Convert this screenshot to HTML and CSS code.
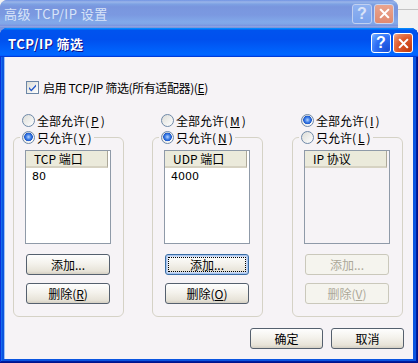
FILE: index.html
```html
<!DOCTYPE html>
<html lang="zh-CN">
<head>
  <meta charset="UTF-8">
  <title>TCP/IP 筛选</title>
  <link rel="stylesheet" href="styles.css">
</head>
<body>

  <div class="desktop">
    <div class="behind"></div>

    <!-- Parent dialog (inactive) -->
    <div class="window back">
      <div class="titlebar">
        <span class="title">高级 TCP/IP 设置</span>
        <div class="title-buttons">
          <span class="tbtn help">?</span>
          <span class="tbtn close">
            <svg viewBox="0 0 12 12" width="11" height="11"><path d="M2 2 L10 10 M10 2 L2 10" stroke="#fff" stroke-width="2.2" stroke-linecap="square"/></svg>
          </span>
        </div>
      </div>
    </div>

    <!-- TCP/IP filter dialog (active) -->
    <div class="window front">
      <div class="titlebar">
        <span class="title">TCP/IP 筛选</span>
        <div class="title-buttons">
          <span class="tbtn help">?</span>
          <span class="tbtn close">
            <svg viewBox="0 0 12 12" width="11" height="11"><path d="M2 2 L10 10 M10 2 L2 10" stroke="#fff" stroke-width="2.2" stroke-linecap="square"/></svg>
          </span>
        </div>
      </div>

      <div class="client">
        <div class="check-row">
          <span class="checkbox">
            <svg viewBox="0 0 11 11" width="11" height="11"><path d="M2 5 L4.3 7.5 L9 2.5 L9 4.6 L4.3 9.6 L2 7.1 Z" fill="#2356c8"/></svg>
          </span>
          <span class="narrow">启用 TCP/IP 筛选(所有适配器)(<u>E</u>)</span>
        </div>

        <div class="groups">
          <div class="col">
            <div class="radio-row"><span class="radio"></span>全部允许(<u>P</u>)</div>
            <fieldset class="group">
              <legend><span class="radio on"></span>只允许(<u>Y</u>)</legend>
              <div class="list">
                <div class="list-head"><span>TCP 端口</span></div>
                <div class="list-item">80</div>
              </div>
              <button class="btn">添加...</button>
              <button class="btn">删除(<u>R</u>)</button>
            </fieldset>
          </div>

          <div class="col">
            <div class="radio-row"><span class="radio"></span>全部允许(<u>M</u>)</div>
            <fieldset class="group">
              <legend><span class="radio on"></span>只允许(<u>N</u>)</legend>
              <div class="list">
                <div class="list-head"><span>UDP 端口</span></div>
                <div class="list-item">4000</div>
              </div>
              <button class="btn focused">添加...</button>
              <button class="btn">删除(<u>O</u>)</button>
            </fieldset>
          </div>

          <div class="col">
            <div class="radio-row"><span class="radio on"></span>全部允许(<u>I</u>)</div>
            <fieldset class="group">
              <legend><span class="radio"></span>只允许(<u>L</u>)</legend>
              <div class="list disabled">
                <div class="list-head"><span>IP 协议</span></div>
              </div>
              <button class="btn" disabled>添加...</button>
              <button class="btn" disabled>删除(<u>V</u>)</button>
            </fieldset>
          </div>
        </div>

        <div class="actions">
          <button class="btn wide">确定</button>
          <button class="btn wide">取消</button>
        </div>
      </div>
    </div>
  </div>

</body>
</html>
```

FILE: styles.css
```css
/* Basic Reset */
* {
  margin: 0;
  padding: 0;
  box-sizing: border-box;
}

body {
  font-family: "Noto Sans CJK SC", "Liberation Sans", sans-serif;
  font-size: 12px;
  color: #000;
  background: #f2f2f2;
  overflow: hidden;
}

u {
  text-decoration: underline;
  text-underline-offset: 1px;
}

.narrow {
  letter-spacing: -0.4px;
}

/* Desktop with stacked windows */
.desktop {
  position: relative;
  width: 418px;
  height: 363px;
}

.behind {
  position: absolute;
  left: 396px;
  top: 9px;
  width: 30px;
  border-top: 1px solid #c4c4c4;
}

.window {
  position: absolute;
  border-radius: 8px 8px 0 0;
}

.window.back {
  left: 0;
  top: 0;
  width: 398px;
  height: 363px;
  background: #7a96df;
}

.window.front {
  left: 0;
  top: 28px;
  width: 418px;
  height: 335px;
  display: flex;
  flex-direction: column;
  padding: 0 5px 4px 4px;
  background: #0a55e0;
  box-shadow: inset -1px -1px #00138c, inset 1px 1px #0831d9, inset -2px -2px #001ea0, inset 2px 2px #166aee;
}

/* Title bars */
.titlebar {
  display: flex;
  align-items: center;
  justify-content: space-between;
  border-radius: 7px 7px 0 0;
}

.back .titlebar {
  height: 27px;
  padding: 0 4px 0 4px;
  background: linear-gradient(#7697e7, #7e9ee3 3%, #94afe8 6%, #97b4e9 8%, #82a5e4 14%, #7c9fe2 17%, #7996de 25%, #7b99e1 56%, #82a9e9 81%, #80a5e7 89%, #7b96e1 94%, #7a93df 97%, #abbae3);
}

.front .titlebar {
  height: 29px;
  margin: 0 -5px 0 -4px;
  padding: 1px 5px 0 8px;
  background: linear-gradient(#0997ff, #0053ee 8%, #0050ee 40%, #0066ff 88%, #0066ff 93%, #005bff 95%, #003dd7 96%, #003dd7);
}

.title {
  font-size: 13px;
  font-weight: bold;
  letter-spacing: 0.5px;
  color: #fff;
}

.back .title {
  color: #d8e4f8;
  font-weight: normal;
}

.front .title {
  text-shadow: 1px 1px #0f1089;
}

.title-buttons {
  display: flex;
  gap: 2px;
}

.tbtn {
  width: 20px;
  height: 20px;
  display: flex;
  align-items: center;
  justify-content: center;
  border: 1px solid #fff;
  border-radius: 3px;
  font-family: "Liberation Sans", sans-serif;
  font-size: 16px;
  font-weight: bold;
  color: #fff;
}

.tbtn.help {
  background: radial-gradient(circle at 85% 85%, #1a4fd8, #2e6ef5 55%, #5d9bff 85%, #a7c8ff);
}

.tbtn.close {
  background: radial-gradient(circle at 85% 85%, #c23d12, #df5a2c 55%, #e8815a 80%, #f4b49a);
}

.back .tbtn {
  border-color: #c9d6f3;
  color: #e4ecfb;
}

.back .tbtn.help {
  background: linear-gradient(#93b6f3, #7aa3ee);
  opacity: 0.9;
}

.back .tbtn.close {
  background: linear-gradient(#eaa58f, #e08a70);
}

/* Client area */
.client {
  flex: 1;
  background: #f6f3f6;
  padding: 22px 9px 0 9px;
  box-shadow: inset 1px 0 #9cc0f5;
}

.check-row {
  display: flex;
  align-items: center;
  height: 17px;
  padding-left: 13px;
  gap: 4px;
}

.checkbox {
  width: 13px;
  height: 13px;
  display: flex;
  align-items: center;
  justify-content: center;
  border: 1px solid #6c86a6;
  background: linear-gradient(135deg, #dcdcd7, #fff);
}

.groups {
  display: flex;
  margin-top: 16px;
}

.col {
  width: 111px;
}

.col + .col {
  margin-left: 28px;
}

.col:last-child {
  margin-left: 29px;
}

.radio-row,
.group legend {
  display: flex;
  align-items: center;
  height: 17px;
  gap: 2px;
}

.radio-row {
  padding-left: 9px;
}

.radio {
  width: 13px;
  height: 13px;
  border-radius: 50%;
  border: 1px solid #6f89a8;
  background: linear-gradient(135deg, #dcdcd7, #fff);
  flex-shrink: 0;
}

.radio.on {
  background: radial-gradient(circle at 50% 45%, #b8d4ff 0, #3f7fe6 2.5px, #1d58cc 4px, transparent 4.6px), linear-gradient(135deg, #dcdcd7, #fff);
}

/* Group box */
.group {
  border: 1px solid #d5d2c6;
  border-radius: 6px;
  padding: 4px 12px 12px 11px;
}

.group legend {
  margin-left: -5px;
  padding: 0 2px;
}

/* Listview */
.list {
  height: 94px;
  border: 1px solid #8f9aa8;
  background: #fff;
}

.list.disabled {
  background: transparent;
}

.list-head {
  height: 17px;
  padding-right: 2px;
}

.list-head span {
  display: block;
  height: 17px;
  line-height: 16px;
  padding-left: 8px;
  background: #ebeadb;
  border-bottom: 2px solid #d6d2c2;
  border-right: 1px solid #aca899;
}

.list-item {
  font-family: "DejaVu Sans", sans-serif;
  font-size: 11px;
  line-height: 16px;
  padding: 1px 0 0 6px;
}

/* Buttons */
.btn {
  display: block;
  width: 84px;
  height: 21px;
  margin: 10px 0 0 1px;
  font-family: inherit;
  font-size: 12px;
  color: #000;
  border: 1px solid #55606e;
  border-radius: 3px;
  background: linear-gradient(#fefefe, #f4f2ec 45%, #e7e3d8 85%, #d4cfc3);
  cursor: pointer;
}

.btn + .btn {
  margin-top: 8px;
}

.btn.focused {
  border-color: #3a6ea5;
  box-shadow: inset 0 0 0 1px #a9c4ef, inset 0 0 0 2px #cddcf5;
  outline: 1px dotted #000;
  outline-offset: -4px;
}

.btn:disabled {
  color: #aca899;
  border-color: #cac8bb;
  background: #f5f4ee;
  cursor: default;
}

.actions {
  display: flex;
  justify-content: flex-end;
  gap: 8px;
  margin-top: 11px;
}

.actions .btn {
  width: 73px;
  margin: 0;
}
```
